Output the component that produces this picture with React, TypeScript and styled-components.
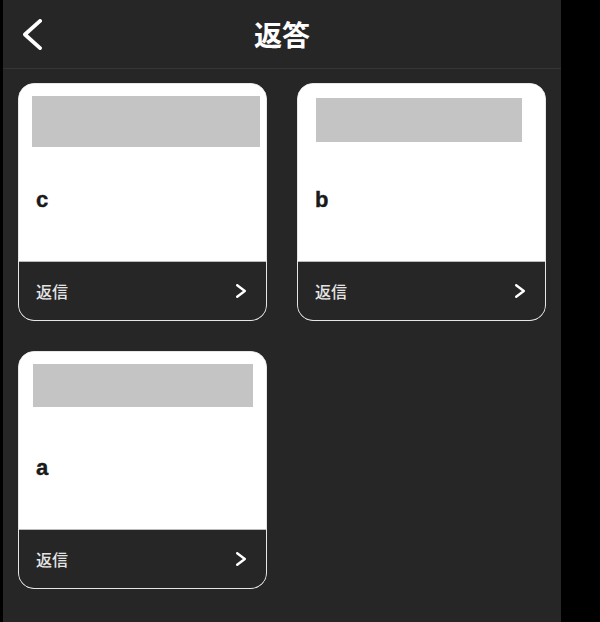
import React from "react";
import styled, { createGlobalStyle } from "styled-components";

const Global = createGlobalStyle`
  html, body { margin: 0; padding: 0; background: #000; }
  body { font-family: "Noto Sans CJK JP", "Liberation Sans", sans-serif; }
`;

const Panel = styled.div`
  margin-left: 3px;
  width: 558px;
  height: 622px;
  background: #262626;
  display: flex;
  flex-direction: column;
`;

const Header = styled.header`
  height: 68px;
  border-bottom: 1px solid #353535;
  display: grid;
  grid-template-columns: 60px 1fr 60px;
  align-items: center;
`;

const BackButton = styled.button`
  background: none;
  border: none;
  padding: 0 0 0 20px;
  height: 68px;
  display: flex;
  align-items: center;
  cursor: pointer;
`;

const Title = styled.h1`
  margin: 0;
  text-align: center;
  color: #fff;
  font-size: 28px;
  font-weight: 700;
  font-family: "Noto Sans CJK JP", sans-serif;
  line-height: 1;
`;

const Grid = styled.div`
  display: grid;
  grid-template-columns: 249px 249px;
  column-gap: 30px;
  row-gap: 30px;
  padding: 14px 15px 0;
`;

const Card = styled.div`
  height: 238px;
  box-sizing: border-box;
  border: 1.5px solid #e6e6e6;
  border-radius: 16px;
  overflow: hidden;
  display: flex;
  flex-direction: column;
  background: #fff;
`;

const CardBody = styled.div`
  flex: 1;
  background: #fff;
  position: relative;
`;

const Thumb = styled.div<{ $w: number; $h: number; $x: number; $y: number }>`
  width: ${(p) => p.$w}px;
  height: ${(p) => p.$h}px;
  margin: ${(p) => p.$y}px 0 0 ${(p) => p.$x}px;
  background: #c4c4c4;
`;

const Name = styled.div`
  position: absolute;
  left: 17px;
  top: 103px;
  font-family: "Liberation Sans", Arial, sans-serif;
  font-weight: 700;
  font-size: 22px;
  color: #1a1a1a;
  line-height: 26px;
  -webkit-text-stroke: 0.4px #1a1a1a;
`;

const Footer = styled.div`
  height: 58px;
  background: #262626;
  border-top: 1px solid #bbb;
  display: flex;
  align-items: center;
  justify-content: space-between;
  padding: 0 20px 0 17px;
`;

const ReplyLabel = styled.span`
  color: #e4e4e4;
  font-size: 16px;
  font-weight: 500;
  font-family: "Noto Sans CJK JP", sans-serif;
`;

const Chevron = ({ w, h, sw, dir }: { w: number; h: number; sw: number; dir: "l" | "r" }) => (
  <svg width={w} height={h} viewBox={`0 0 ${w} ${h}`} fill="none">
    <polyline
      points={
        dir === "l"
          ? `${w - sw / 2},${sw / 2} ${sw / 2},${h / 2} ${w - sw / 2},${h - sw / 2}`
          : `${sw / 2},${sw / 2} ${w - sw / 2},${h / 2} ${sw / 2},${h - sw / 2}`
      }
      stroke="#fff"
      strokeWidth={sw}
      strokeLinecap="round"
      strokeLinejoin="round"
    />
  </svg>
);

const items = [
  { name: "c", w: 228, h: 51, x: 13, y: 12 },
  { name: "b", w: 206, h: 44, x: 18, y: 14 },
  { name: "a", w: 220, h: 43, x: 14, y: 12 },
];

export default function App() {
  return (
    <>
      <Global />
      <Panel>
        <Header>
          <BackButton aria-label="back">
            <Chevron w={19} h={31} sw={3.8} dir="l" />
          </BackButton>
          <Title>返答</Title>
          <span />
        </Header>
        <Grid>
          {items.map((it) => (
            <Card key={it.name}>
              <CardBody>
                <Thumb $w={it.w} $h={it.h} $x={it.x} $y={it.y} />
                <Name>{it.name}</Name>
              </CardBody>
              <Footer>
                <ReplyLabel>返信</ReplyLabel>
                <Chevron w={10} h={14} sw={2.4} dir="r" />
              </Footer>
            </Card>
          ))}
        </Grid>
      </Panel>
    </>
  );
}
